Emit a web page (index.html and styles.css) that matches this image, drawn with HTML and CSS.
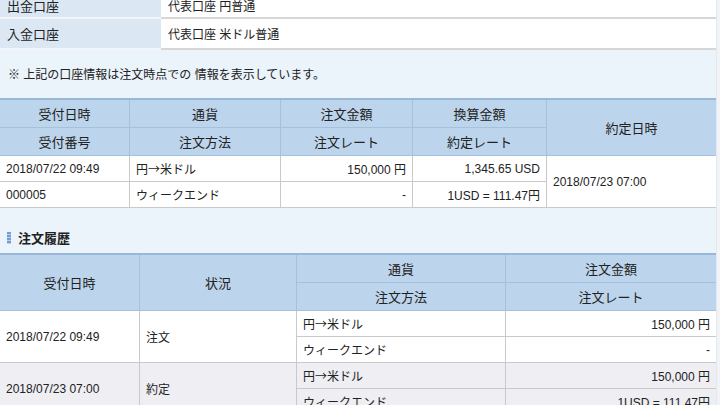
FILE: index.html
```html
<!DOCTYPE html>
<html lang="ja">
<head>
<meta charset="utf-8">
<link rel="stylesheet" href="styles.css">
</head>
<body>
<div class="page">
  <table class="acct">
    <tr class="first"><th>出金口座</th><td>代表口座 円普通</td></tr>
    <tr><th>入金口座</th><td>代表口座 米ドル普通</td></tr>
  </table>
  <p class="note">※ 上記の口座情報は注文時点での 情報を表示しています。</p>

  <table class="grid order">
    <colgroup><col class="c1"><col class="c2"><col class="c3"><col class="c4"><col class="c5"></colgroup>
    <tr class="h">
      <th>受付日時</th><th>通貨</th><th>注文金額</th><th>換算金額</th><th class="end" rowspan="2">約定日時</th>
    </tr>
    <tr class="h">
      <th>受付番号</th><th>注文方法</th><th>注文レート</th><th>約定レート</th>
    </tr>
    <tr>
      <td>2018/07/22 09:49</td><td>円<span class="ja">→</span>米ドル</td><td class="r">150,000 円</td><td class="r">1,345.65 USD</td><td class="end" rowspan="2">2018/07/23 07:00</td>
    </tr>
    <tr>
      <td>000005</td><td>ウィークエンド</td><td class="r">-</td><td class="r">1USD = 111.47円</td>
    </tr>
  </table>

  <h2 class="sec"><span class="mark"></span>注文履歴</h2>

  <table class="grid hist">
    <colgroup><col class="d1"><col class="d2"><col class="d3"><col class="d4"></colgroup>
    <tr class="h">
      <th rowspan="2">受付日時</th><th rowspan="2">状況</th><th>通貨</th><th class="end">注文金額</th>
    </tr>
    <tr class="h">
      <th>注文方法</th><th class="end">注文レート</th>
    </tr>
    <tr>
      <td rowspan="2">2018/07/22 09:49</td><td rowspan="2">注文</td><td>円<span class="ja">→</span>米ドル</td><td class="r end">150,000 円</td>
    </tr>
    <tr>
      <td>ウィークエンド</td><td class="r end">-</td>
    </tr>
    <tr class="alt">
      <td rowspan="2">2018/07/23 07:00</td><td rowspan="2">約定</td><td>円<span class="ja">→</span>米ドル</td><td class="r end">150,000 円</td>
    </tr>
    <tr class="alt">
      <td>ウィークエンド</td><td class="r end">1USD = 111.47円</td>
    </tr>
  </table>
</div>
</body>
</html>
```

FILE: styles.css
```css
html, body {
  margin: 0;
  padding: 0;
  background: #f1f3f7;
  overflow: hidden;
}
body {
  font-family: "Liberation Sans", "Noto Sans CJK JP", sans-serif;
  font-size: 12px;
  color: #222;
}
.ja {
  font-family: "Noto Sans CJK JP", sans-serif;
}
.page {
  width: 716px;
  background: #ebf3fb;
  border-right: 1px solid #e2e8ef;
  height: 420px;
}
table {
  border-collapse: separate;
  border-spacing: 0;
  width: 716px;
  table-layout: fixed;
}
.acct {
  margin-top: -6px;
}
.acct th,
.acct td {
  box-sizing: border-box;
  height: 31px;
  padding: 0 0 0 7px;
}
.acct .first th,
.acct .first td {
  height: 25px;
}
.acct th {
  width: 161px;
  background: #dbe7f3;
  font-weight: normal;
  font-size: 13px;
  text-align: left;
  border-bottom: 2px solid #f2f6fa;
}
.acct td {
  background: #fff;
  font-size: 12px;
  border-bottom: 2px solid #d6d6d6;
}
.note {
  margin: 0;
  padding: 16px 0 0 8px;
  height: 32px;
  line-height: 18px;
  font-size: 12px;
}
.grid {
  border-top: 2px solid #98b8d8;
}
.grid th {
  background: #bdd5ec;
  font-weight: normal;
  font-size: 13px;
  text-align: center;
  padding: 0;
  height: 28px;
  box-sizing: border-box;
  border-right: 1px solid #a6c1dc;
  border-bottom: 1px solid #a6c1dc;
}
.grid td {
  background: #fff;
  padding: 0 6px;
  height: 26px;
  box-sizing: border-box;
  white-space: nowrap;
  border-right: 1px solid #c9c9c9;
  border-bottom: 1px solid #c9c9c9;
}
.grid .end { border-right: none; }
.grid .alt td { background: #eeeef3; }
.grid td.r { text-align: right; }
.c1 { width: 130px; }
.c2 { width: 151px; }
.c3 { width: 132px; }
.c4 { width: 134px; }
.c5 { width: 169px; }
.d1 { width: 140px; }
.d2 { width: 157px; }
.d3 { width: 209px; }
.d4 { width: 210px; }
.sec {
  margin: 0;
  height: 45px;
  box-sizing: border-box;
  padding: 15px 0 0 7px;
  font-size: 13px;
  font-weight: bold;
  line-height: 17px;
  display: flex;
  align-items: center;
  gap: 7px;
}
.mark {
  width: 4px;
  height: 12px;
  background: repeating-linear-gradient(#6f9fd6 0 2px, #b7d0ec 2px 3px);
}
```
